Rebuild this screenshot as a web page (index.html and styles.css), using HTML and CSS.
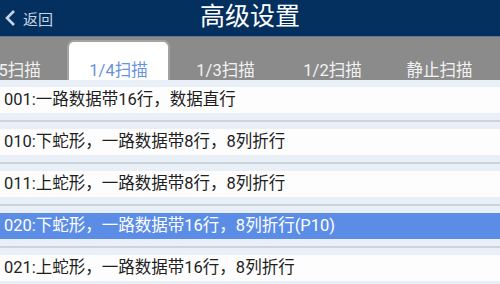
FILE: index.html
```html
<html>

<head>
    <title>高级设置</title>
    <link rel="stylesheet" href="styles.css">
</head>

<body>
    <div class="screen">
        <div class="top-bar">
            <div class="back">
                <svg class="back-arrow" width="14" height="18" viewBox="0 0 14 18">
                    <polyline points="10,2 3,9 10,16" fill="none" stroke="#c9d4e3" stroke-width="2.6" />
                </svg>
                <span>返回</span>
            </div>
            <div class="title">高级设置</div>
        </div>

        <!-- 扫描方式 탭 -->
        <div class="tabs">
            <div class="tab">1/5扫描</div>
            <div class="tab active"><span>1/4扫描</span></div>
            <div class="tab">1/3扫描</div>
            <div class="tab">1/2扫描</div>
            <div class="tab">静止扫描</div>
        </div>

        <div class="list">
            <div class="item"><div class="item-text">001:一路数据带16行，数据直行</div></div>
            <div class="item"><div class="item-text">010:下蛇形，一路数据带8行，8列折行</div></div>
            <div class="item"><div class="item-text">011:上蛇形，一路数据带8行，8列折行</div></div>
            <div class="item selected"><div class="item-text">020:下蛇形，一路数据带16行，8列折行(P10)</div></div>
            <div class="item"><div class="item-text">021:上蛇形，一路数据带16行，8列折行</div></div>
        </div>
    </div>
</body>

</html>
```

FILE: styles.css
```css
* {
    box-sizing: border-box;
    margin: 0;
    padding: 0;
}

body {
    width: 500px;
    height: 284px;
    overflow: hidden;
    font-family: "Roboto", "Noto Sans CJK SC", sans-serif;
    background-color: #e9eff7;
}

.screen {
    width: 500px;
    height: 284px;
    display: flex;
    flex-direction: column;
    overflow: hidden;
}

/* 상단 바 */
.top-bar {
    height: 37px;
    background-color: #03305f;
    border-bottom: 1px solid #5f7591;
    display: flex;
    align-items: center;
    position: relative;
    flex-shrink: 0;
}

.back {
    display: flex;
    align-items: center;
    padding-left: 4px;
    color: #c9d4e3;
    font-size: 15px;
}

.back-arrow {
    margin-right: 5px;
}

.title {
    position: absolute;
    left: 0;
    right: 0;
    top: 0;
    height: 36px;
    line-height: 34px;
    text-align: center;
    color: #ffffff;
    font-size: 25px;
    pointer-events: none;
}

/* 탭 */
.tabs {
    height: 43px;
    background-color: #8b8b8b;
    display: flex;
    margin-left: -42px;
    width: 580px;
    flex-shrink: 0;
}

.tab {
    width: 107px;
    flex-shrink: 0;
    color: #f2f2f2;
    font-size: 16.5px;
    text-align: center;
    padding-top: 20px;
}

.tab.active {
    padding: 3px 2px 0;
}

.tab.active span {
    display: block;
    height: 40px;
    background-color: #ffffff;
    border: 2px solid #a3a3a3;
    border-bottom: none;
    border-radius: 7px 7px 0 0;
    color: #6892dc;
    padding-top: 15px;
}

/* 목록 */
.list {
    flex: 1;
    background-color: #e9eff7;
}

.item {
    height: 42px;
    padding-top: 7px;
    border-bottom: 2px solid #cbd3dd;
}

.item-text {
    height: 26px;
    line-height: 26px;
    background-color: #fdfdfd;
    color: #1e1e1e;
    font-size: 16.5px;
    padding-left: 4px;
}

.item.selected .item-text {
    background-color: #5b8de6;
    color: #ffffff;
}
```
